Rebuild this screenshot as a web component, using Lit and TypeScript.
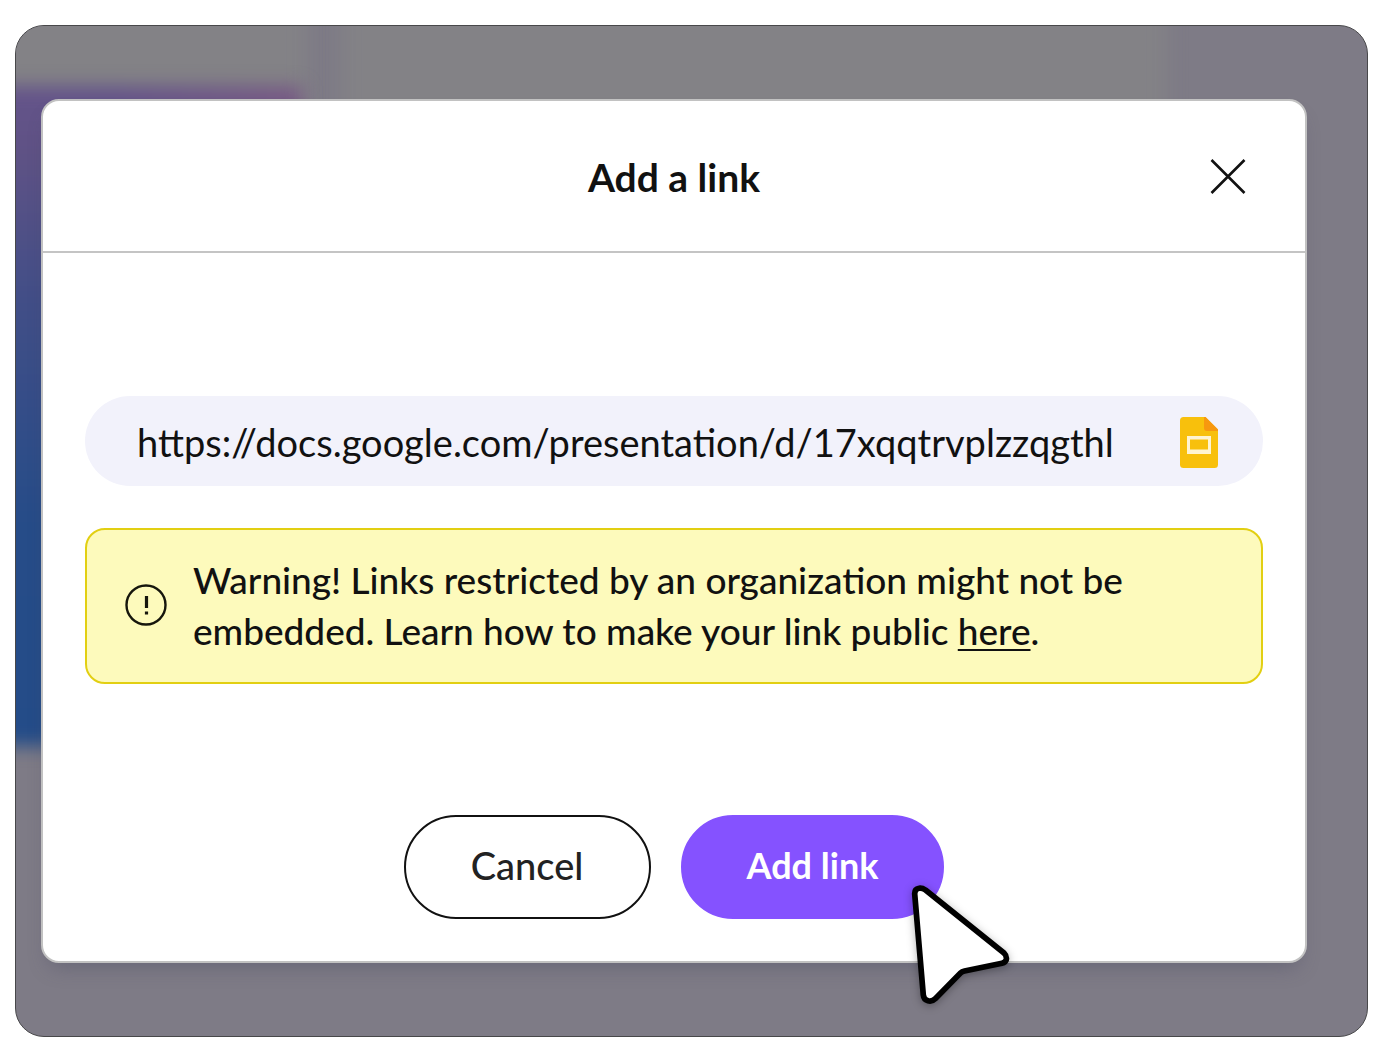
import { LitElement, html, css } from "lit";
import { customElement, state } from "lit/decorators.js";

@customElement("app-root")
export class AppRoot extends LitElement {
  @state() private url = "https://docs.google.com/presentation/d/17xqqtrvplzzqgthl";

  static styles = css`
    :host {
      display: block;
      font-family: Lato, "Open Sans", sans-serif;
      color: #111;
    }
    *,
    *::before,
    *::after {
      box-sizing: border-box;
    }
    .page {
      min-height: 100vh;
      display: flex;
      padding: 25px 17px 11px 15px;
      background: #fff;
    }
    .frame {
      position: relative;
      flex: 1;
      min-width: 0;
      display: flex;
      padding: 73px 60px 73px 25px;
      border: 1px solid #48484a;
      border-radius: 29px;
      background: #7e7b86;
      overflow: hidden;
    }
    .backdrop {
      position: absolute;
      inset: 0;
    }
    .panel,
    .poster {
      position: absolute;
    }
    .panel {
      top: -40px;
      height: 640px;
      background: #838286;
      filter: blur(9px);
    }
    .panel-left {
      left: -40px;
      width: 331px;
    }
    .panel-main {
      left: 325px;
      right: 200px;
    }
    .poster {
      left: -40px;
      width: 326px;
      top: 60px;
      height: 660px;
      background: linear-gradient(100deg, transparent 40%, #785a84 100%) top / 100% 60px no-repeat,
        linear-gradient(#64538a, #5f5285 10%, #424e87 32%, #264c88 66%, #244c88);
      filter: blur(9px);
    }
    .modal {
      position: relative;
      flex: 1;
      min-width: 0;
      display: flex;
      flex-direction: column;
      border: 2px solid #c2c2c2;
      border-radius: 18px;
      background: #fff;
      box-shadow: 0 12px 20px -8px rgba(70, 70, 95, 0.4);
    }
    .head {
      display: grid;
      grid-template-columns: 1fr auto 1fr;
      align-items: center;
      height: 152px;
      padding: 2px 59px 0;
      border-bottom: 2px solid #c4c4c4;
    }
    .title {
      grid-column: 2;
      margin: 0;
      font-size: 39px;
      line-height: 48px;
      font-weight: 700;
    }
    .close {
      justify-self: end;
      display: flex;
      padding: 0;
      border: 0;
      background: none;
      cursor: pointer;
    }
    .body {
      flex: 1;
      display: flex;
      flex-direction: column;
      justify-content: space-between;
      padding: 143px 42px 42px;
    }
    .fields {
      display: flex;
      flex-direction: column;
      gap: 42px;
    }
    .field {
      display: flex;
      align-items: center;
      gap: 40px;
      height: 90px;
      padding: 2px 45px 0 52px;
      border-radius: 45px;
      background: #f2f2fb;
    }
    .url {
      flex: 1;
      min-width: 0;
      height: 56px;
      padding: 0;
      border: 0;
      outline: 0;
      background: none;
      color: #111;
      font: 400 38px/56px Lato, "Open Sans", sans-serif;
    }
    .notice {
      display: flex;
      align-items: center;
      gap: 26px;
      min-height: 156px;
      padding: 0 40px 2px 38px;
      border: 2px solid #e2cf12;
      border-radius: 20px;
      background: #fdfabc;
    }
    .notice svg {
      flex: none;
    }
    .notice p {
      margin: 0;
      font-size: 37px;
      line-height: 51px;
      font-weight: 500;
    }
    .notice a {
      color: inherit;
      text-decoration: underline;
      text-decoration-thickness: 2px;
      text-underline-offset: 4px;
    }
    .actions {
      display: flex;
      justify-content: center;
      gap: 30px;
    }
    .btn {
      height: 104px;
      min-width: 247px;
      padding: 0 64px 4px;
      border: 2px solid #111;
      border-radius: 52px;
      background: #fff;
      color: #222;
      font: 500 38px/48px Lato, "Open Sans", sans-serif;
      white-space: nowrap;
      cursor: pointer;
    }
    .btn-primary {
      min-width: 262px;
      border-color: #8552ff;
      background: #8552ff;
      color: #fff;
      font-size: 36px;
      font-weight: 700;
    }
    .target {
      position: relative;
      display: flex;
    }
    .pointer {
      position: absolute;
      left: 224px;
      top: 65px;
      pointer-events: none;
      filter: drop-shadow(0 2px 4px rgba(0, 0, 0, 0.3));
    }
  `;

  private onInput(e: Event) {
    this.url = (e.target as HTMLInputElement).value;
  }

  render() {
    return html`
      <main class="page">
        <div class="frame">
          <div class="backdrop" aria-hidden="true">
            <div class="panel panel-left"></div>
            <div class="panel panel-main"></div>
            <div class="poster"></div>
          </div>
          <section class="modal" role="dialog" aria-labelledby="title">
            <header class="head">
              <h1 class="title" id="title">Add a link</h1>
              <button class="close" type="button" aria-label="Close">
                <svg width="36" height="38" viewBox="0 0 36 38" fill="none" stroke="#111" stroke-width="2.6">
                  <path d="M1.5 2 34.5 35M34.5 2 1.5 35" />
                </svg>
              </button>
            </header>
            <div class="body">
              <div class="fields">
                <div class="field">
                  <input class="url" type="text" aria-label="Link" .value=${this.url} @input=${this.onInput} />
                  <svg width="38" height="51" viewBox="0 0 38 51" aria-hidden="true">
                    <path fill="#f8c00c" d="M3.5 0H25.5L38 12.5V47.5Q38 51 34.5 51H3.5Q0 51 0 47.500V3.5Q0 0 3.5 0Z" />
                    <path fill="#f7980f" d="M25.5 0 38 12.5V14H27Q24 14 24 11V0Z" />
                    <path fill="#fff4d0" fill-rule="evenodd" d="M7 19H31V37H7ZM10 22.5V32.5H28V22.5Z" />
                  </svg>
                </div>
                <div class="notice" role="note">
                  <svg width="42" height="42" viewBox="0 0 42 42" fill="none" stroke="#16160c" aria-hidden="true">
                    <circle cx="21" cy="21" r="19.5" stroke-width="2.4" />
                    <path stroke-width="3.2" d="M21.5 12V24M21.5 27.5V30.5" />
                  </svg>
                  <p>
                    Warning! Links restricted by an organization might not be embedded. Learn how to make your link
                    public <a href="#">here</a>.
                  </p>
                </div>
              </div>
              <div class="actions">
                <button class="btn" type="button">Cancel</button>
                <div class="target">
                  <button class="btn btn-primary" type="button">Add link</button>
                  <svg class="pointer" width="110" height="130" viewBox="0 0 110 130" aria-hidden="true">
                    <path
                      fill="#fff"
                      stroke="#000"
                      stroke-width="5.7"
                      stroke-linejoin="round"
                      d="M9.7 14Q9.500 8.900 14 8.200Q17 7.600 20.500 10L99 73Q102 76 101.300 79.500Q100.600 82.500 97 83.300L59.500 91Q57 91.500 55.500 93L30.500 118.500Q27 122 22.900 120.800Q18.700 119.500 18.300 115Z"
                    />
                  </svg>
                </div>
              </div>
            </div>
          </section>
        </div>
      </main>
    `;
  }
}
